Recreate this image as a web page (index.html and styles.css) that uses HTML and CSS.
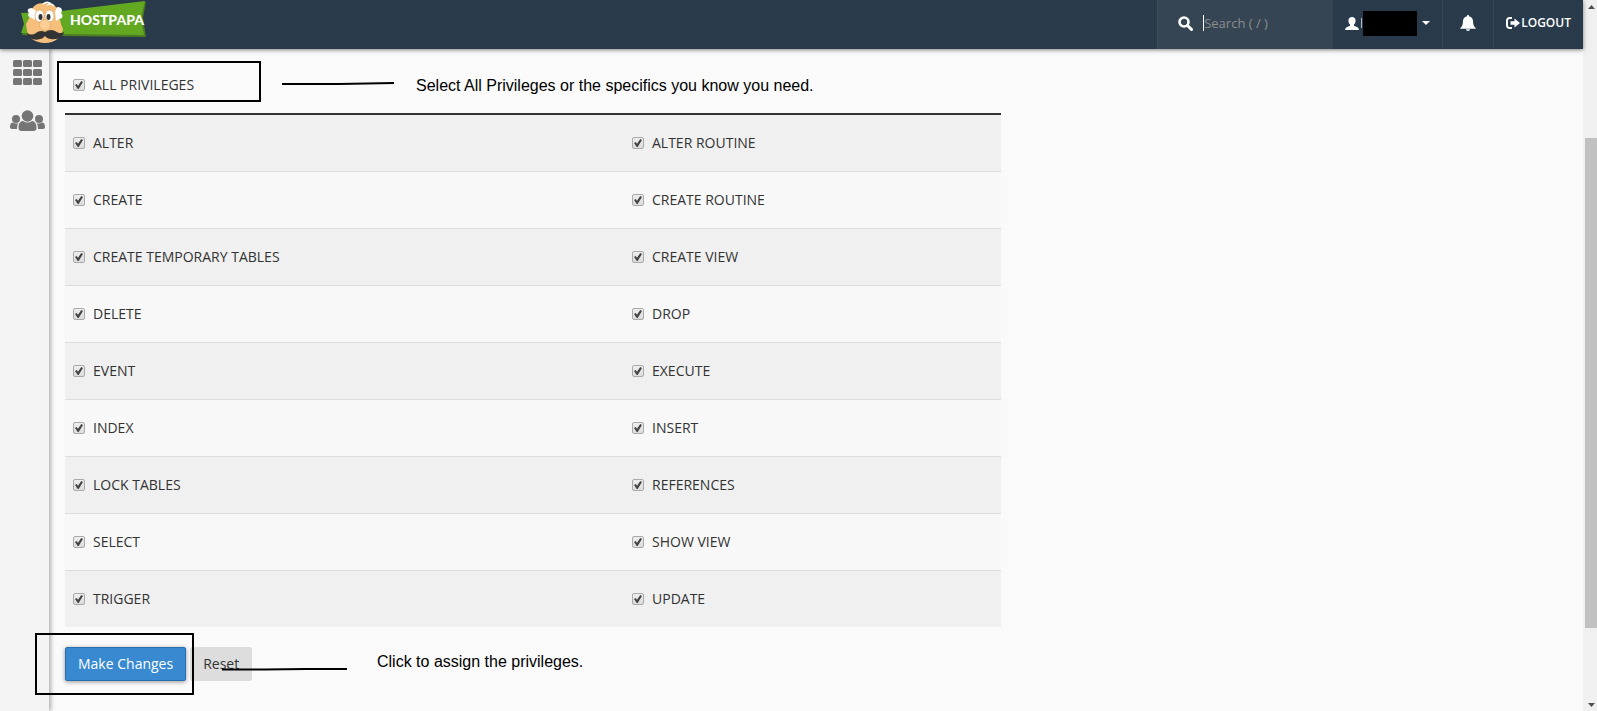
FILE: index.html
```html
<!DOCTYPE html>
<html lang="en">
<head>
<meta charset="utf-8">
<title>Manage User Privileges</title>
<link rel="stylesheet" href="styles.css">
</head>
<body>
<div class="app">
  <div class="page">
    <header class="topbar">
      <a class="logo" href="#" aria-label="HostPapa">
        <svg class="logo-art" width="128" height="44" viewBox="0 0 128 44" aria-hidden="true">
          <path fill="#4c7d22" d="M3 14 42 12 127 2 124 18 127 37 38 36 3 35 6 25z"/>
          <path fill="#62a820" d="M2 13 42 11 126 1 122 18 125 35 40 34 2 33 5 24z"/>
          <path fill="#f6c07c" d="M13 13C12 6 18 3 25 3s16 3 15 13l2 8 2 5c-1 8-8 14-18 14S10 38 8 31L7 24z"/>
          <path fill="#fff" d="M13 8c-5 0-5 3-3 5-2 2 0 5 3 5l3 2 1-9zM38 7c5 0 6 3 4 6 3 3 1 6-2 6l-3 2-1-9z"/>
          <path fill="none" stroke="#fff" stroke-width="1.500" d="M24 4q5-4 9 1M28 5q4-3 7 1"/>
          <ellipse cx="20.500" cy="16" rx="4.500" ry="6" fill="#fff" stroke="#d29a5a" stroke-width=".6"/>
          <ellipse cx="30.500" cy="16" rx="4.500" ry="6" fill="#fff" stroke="#d29a5a" stroke-width=".6"/>
          <ellipse cx="21.500" cy="17" rx="2" ry="3" fill="#333"/>
          <ellipse cx="29.500" cy="17" rx="2" ry="3" fill="#333"/>
          <ellipse cx="26" cy="25" rx="5.500" ry="5.500" fill="#fbcf94" stroke="#d79d5b" stroke-width=".6"/>
          <path fill="#333" d="M26 32c-3-2-7-1-9 1-3 2-6 2-9 0 1 5 7 8 13 6 2 0 4-2 5-3 1 1 3 3 6 3 7 1 12-2 13-7-3 2-6 1-9-1-3-2-7-1-10 1z"/>
        </svg>
        <span class="logo-name">HOSTPAPA</span>
      </a>
      <nav class="tools" aria-label="Account">
        <label class="search">
          <svg width="15" height="15" viewBox="0 0 15 15" aria-hidden="true"><circle cx="6" cy="6" r="4.500" fill="none" stroke="#fff" stroke-width="2.600"/><path d="M9.500 9.500 13.500 13.500" stroke="#fff" stroke-width="3" stroke-linecap="round"/></svg>
          <span class="cursor"></span>
          <input class="search-input" type="text" placeholder="Search ( / )" aria-label="Search">
        </label>
        <button class="tool user" type="button" aria-label="Account menu">
          <svg width="14" height="13" viewBox="0 0 14 13" aria-hidden="true"><path fill="#fff" d="M7 0c2.300 0 3.600 1.500 3.600 3.800 0 1.800-.9 3.200-1.700 4v1c1 .7 4.100 1.200 4.700 2.600l.4 1.600H0l.4-1.600C1 10 4.100 9.500 5.100 8.800v-1c-.8-.8-1.700-2.200-1.700-4C3.400 1.500 4.700 0 7 0z"/></svg>
          <span class="initial"></span>
          <span class="redacted"></span>
          <svg class="caret" width="8" height="4" viewBox="0 0 8 4" aria-hidden="true"><path fill="#fff" d="M0 0h8L4 4z"/></svg>
        </button>
        <button class="tool bell" type="button" aria-label="Notifications">
          <svg width="16" height="16" viewBox="0 0 16 16" aria-hidden="true"><path fill="#fff" d="M8 0c.7 0 1.100.5 1 1.200 2.600.5 4 2.500 4 4.800 0 4 1.100 5.600 2.700 7v.8H.3V13C1.900 11.600 3 10 3 6c0-2.300 1.400-4.300 4-4.800C6.900.5 7.300 0 8 0zM6 14.300h4a2 1.700 0 0 1-4 0z"/></svg>
        </button>
        <a class="tool logout" href="#">
          <svg width="14" height="12" viewBox="0 0 14 12" aria-hidden="true"><path fill="none" stroke="#fff" stroke-width="2" d="M6 1H3.500A2.500 2.500 0 0 0 1 3.500v5A2.500 2.500 0 0 0 3.500 11H6"/><path fill="#fff" d="M4.500 4.200H8.500V1.500L14 6 8.500 10.500V7.800H4.500z"/></svg>
          <span>LOGOUT</span>
        </a>
      </nav>
    </header>
    <div class="body">
      <nav class="sidebar" aria-label="Main">
        <a href="#" aria-label="Home">
          <svg width="30" height="26" viewBox="0 0 30 26" fill="#757575" aria-hidden="true"><rect x="1" width="9" height="7" rx="1.500"/><rect x="11" width="9" height="7" rx="1.500"/><rect x="21" width="9" height="7" rx="1.500"/><rect x="1" y="9" width="9" height="7" rx="1.500"/><rect x="11" y="9" width="9" height="7" rx="1.500"/><rect x="21" y="9" width="9" height="7" rx="1.500"/><rect x="1" y="18" width="9" height="7" rx="1.500"/><rect x="11" y="18" width="9" height="7" rx="1.500"/><rect x="21" y="18" width="9" height="7" rx="1.500"/></svg>
        </a>
        <a href="#" aria-label="Users">
          <svg width="35" height="22" viewBox="0 0 35 22" fill="#757575" aria-hidden="true"><circle cx="17.500" cy="6" r="5.800"/><path d="M8.500 18c0-4 1.500-7 4.500-7 3 2 6 2 9 0 3 0 4.500 3 4.500 7 0 2-1 3-3 3h-12c-2 0-3-1-3-3z"/><circle cx="6" cy="9" r="4"/><circle cx="29" cy="9" r="4"/><path d="M0 17c0-2.500 1-4.500 3-4.500 2 1.300 4 1.300 5.500.5-1 1.500-1.500 3.500-1.500 6H2c-1.300 0-2-.7-2-2zM35 17c0-2.500-1-4.500-3-4.500-2 1.300-4 1.300-5.500.5 1 1.500 1.500 3.500 1.500 6h5c1.300 0 2-.7 2-2z"/></svg>
        </a>
      </nav>
      <main class="content">
        <div class="all">
          <label class="check"><input type="checkbox" checked>ALL PRIVILEGES</label>
          <div class="frame frame-all"></div>
          <svg class="pointer pointer-all" width="113" height="4" viewBox="0 0 113 4" aria-hidden="true"><path fill="none" stroke="#000" stroke-width="2" d="M0 3H57L112 2"/></svg>
          <p class="note note-all">Select All Privileges or the specifics you know you need.</p>
        </div>
        <table class="privileges">
          <tbody>
            <tr><td><label class="check"><input type="checkbox" checked>ALTER</label></td><td><label class="check"><input type="checkbox" checked>ALTER ROUTINE</label></td></tr>
            <tr><td><label class="check"><input type="checkbox" checked>CREATE</label></td><td><label class="check"><input type="checkbox" checked>CREATE ROUTINE</label></td></tr>
            <tr><td><label class="check"><input type="checkbox" checked>CREATE TEMPORARY TABLES</label></td><td><label class="check"><input type="checkbox" checked>CREATE VIEW</label></td></tr>
            <tr><td><label class="check"><input type="checkbox" checked>DELETE</label></td><td><label class="check"><input type="checkbox" checked>DROP</label></td></tr>
            <tr><td><label class="check"><input type="checkbox" checked>EVENT</label></td><td><label class="check"><input type="checkbox" checked>EXECUTE</label></td></tr>
            <tr><td><label class="check"><input type="checkbox" checked>INDEX</label></td><td><label class="check"><input type="checkbox" checked>INSERT</label></td></tr>
            <tr><td><label class="check"><input type="checkbox" checked>LOCK TABLES</label></td><td><label class="check"><input type="checkbox" checked>REFERENCES</label></td></tr>
            <tr><td><label class="check"><input type="checkbox" checked>SELECT</label></td><td><label class="check"><input type="checkbox" checked>SHOW VIEW</label></td></tr>
            <tr><td><label class="check"><input type="checkbox" checked>TRIGGER</label></td><td><label class="check"><input type="checkbox" checked>UPDATE</label></td></tr>
          </tbody>
        </table>
        <div class="actions">
          <button class="btn primary" type="submit">Make Changes</button>
          <button class="btn" type="reset">Reset</button>
          <div class="frame frame-submit"></div>
          <svg class="pointer pointer-submit" width="126" height="4" viewBox="0 0 126 4" aria-hidden="true"><path fill="none" stroke="#000" stroke-width="2" d="M0 2.500H42L84 2H125"/></svg>
          <p class="note note-submit">Click to assign the privileges.</p>
        </div>
      </main>
    </div>
  </div>
  <div class="scrollbar" aria-hidden="true">
    <svg width="7" height="4" viewBox="0 0 7 4"><path fill="#505050" d="M0 4 3.500 0 7 4z"/></svg>
    <div class="track"><div class="thumb"></div></div>
    <svg width="7" height="4" viewBox="0 0 7 4"><path fill="#505050" d="M0 0 3.500 4 7 0z"/></svg>
  </div>
</div>
</body>
</html>
```
FILE: styles.css
```css
* {
  box-sizing: border-box;
}

body {
  margin: 0;
  background: #fafafa;
  color: #333;
  font: 14px/20px "Open Sans", "Noto Sans", sans-serif;
}

svg {
  display: block;
  flex: none;
}

.app {
  display: flex;
  min-height: 100vh;
}

.page {
  flex: 1;
  display: flex;
  flex-direction: column;
}

/* Top bar */

.topbar {
  position: relative;
  z-index: 1;
  display: flex;
  justify-content: space-between;
  height: 49px;
  padding-left: 19px;
  background: #293a4a;
  box-shadow: 0 1px 4px rgba(0, 0, 0, 0.5);
}

.logo {
  position: relative;
}

.logo-name {
  position: absolute;
  left: 51px;
  top: 9px;
  color: #fff;
  font: 900 14px/22px Lato, "Liberation Sans", sans-serif;
}

.tools {
  display: flex;
}

.search {
  display: flex;
  align-items: center;
  width: 175px;
  padding: 0 20px 3px;
  border-left: 1px solid #3d4d5c;
  background: #354554;
}

.cursor {
  width: 1px;
  height: 16px;
  margin-left: 10px;
  background: #fff;
}

.search-input {
  width: 100px;
  padding: 0;
  border: 0;
  outline: 0;
  background: none;
  color: #fff;
  font: 13px/20px "Open Sans", sans-serif;
}

.search-input::placeholder {
  color: #8c8c8c;
  opacity: 1;
}

.tool {
  display: flex;
  align-items: center;
  padding: 0 12px 3px;
  border: 0;
  border-left: 1px solid #354554;
  background: none;
  color: #fff;
  font: 600 12px/18px "Open Sans", sans-serif;
  text-decoration: none;
}

.initial {
  width: 1px;
  height: 10px;
  margin: 0 1px 0 2px;
  background: #b4bbc2;
}

.redacted {
  width: 54px;
  height: 25px;
  background: #000;
}

.caret {
  margin-left: 5px;
}

.bell {
  padding: 0 17px 4px;
}

.logout {
  gap: 1px;
}

/* Body */

.body {
  flex: 1;
  display: flex;
}

.sidebar {
  display: flex;
  flex-direction: column;
  align-items: center;
  gap: 24px;
  width: 49px;
  padding: 11px 0 0 5px;
  background: #f4f4f4;
  box-shadow: 2px 0 4px rgba(0, 0, 0, 0.3);
}

.content {
  flex: 1;
  padding: 24px 16px 0;
}

.all {
  position: relative;
  padding: 2px 8px 18px;
}

.check {
  display: inline-flex;
  align-items: center;
  gap: 8px;
  vertical-align: top;
}

.check input {
  appearance: none;
  flex: none;
  width: 12px;
  height: 12px;
  margin: 0;
  border: 1px solid #aaa;
  border-radius: 2px;
  background: linear-gradient(#eee, #dcdcdc);
  position: relative;
}

.check input:checked::after {
  content: "";
  position: absolute;
  inset: 1px;
  background: #444;
  clip-path: polygon(0 50%, 20% 38%, 38% 58%, 78% 0, 100% 14%, 46% 100%, 34% 100%);
}

.privileges {
  width: 100%;
  max-width: 936px;
  border-collapse: separate;
  border-spacing: 0;
  border-top: 2px solid #333;
}

.privileges td {
  height: 57px;
  padding: 0 8px;
  border-bottom: 1px solid #ddd;
  background: #f8f8f8;
}

.privileges td:first-child {
  width: 559px;
}

.privileges tr:nth-child(odd) td {
  background: #f0f0f0;
}

.privileges tr:last-child td {
  height: 56px;
  border-bottom: 0;
}

.actions {
  position: relative;
  display: flex;
  gap: 4px;
  padding-top: 20px;
}

.btn {
  padding: 6px 12px;
  border: 1px solid #ddd;
  border-radius: 2px;
  background: #ddd;
  color: #333;
  font: 14px/20px "Open Sans", sans-serif;
}

.primary {
  border-color: #2a6fb0;
  background: #3889d0;
  box-shadow: 0 1px 4px rgba(0, 0, 0, 0.4);
  color: #fff;
  font-weight: 500;
}

/* Annotations drawn over the page */

.frame,
.pointer,
.note {
  position: absolute;
  margin: 0;
}

.frame {
  border: 2px solid #000;
}

.frame-all {
  left: -8px;
  top: -12px;
  width: 204px;
  height: 41px;
}

.pointer-all {
  left: 217px;
  top: 8px;
}

.note {
  color: #000;
  font: 16px/20px "Liberation Sans", Arial, sans-serif;
}

.note-all {
  left: 351px;
  top: 3px;
}

.frame-submit {
  left: -30px;
  top: 6px;
  width: 159px;
  height: 62px;
}

.pointer-submit {
  left: 157px;
  top: 40px;
}

.note-submit {
  left: 312px;
  top: 25px;
}

/* Scrollbar */

.scrollbar {
  display: flex;
  flex-direction: column;
  align-items: center;
  width: 14px;
  padding: 5px 0 4px 3px;
  background: #f0f0f0;
}

.track {
  flex: 1;
  display: flex;
  flex-direction: column;
  align-self: stretch;
  padding: 129px 0 75px;
  margin-left: -1px;
}

.thumb {
  flex: 1;
  background: #c1c1c1;
}
```
